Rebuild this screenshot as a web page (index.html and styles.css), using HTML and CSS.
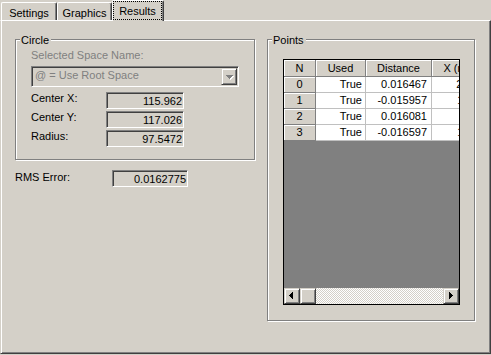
FILE: index.html
```html
<!DOCTYPE html>
<html>
<head>
<meta charset="utf-8">
<link rel="stylesheet" href="styles.css">
</head>
<body>
<div class="tabs">
  <div class="tab tab-settings">Settings</div>
  <div class="tab tab-graphics">Graphics</div>
  <div class="tab tab-active"><span class="focus">Results</span></div>
</div>
<div class="panel">
  <div class="left">
    <div class="group circle">
      <div class="group-title">Circle</div>
      <div class="circle-body">
        <div class="field-label disabled">Selected Space Name:</div>
        <div class="combo">
          <span class="combo-text">@ = Use Root Space</span>
          <span class="combo-btn">
            <svg width="14" height="15" viewBox="0 0 14 15" shape-rendering="crispEdges">
              <g fill="#ffffff">
                <rect x="5" y="7" width="7" height="1"/><rect x="6" y="8" width="5" height="1"/><rect x="7" y="9" width="3" height="1"/><rect x="8" y="10" width="1" height="1"/>
              </g>
              <g fill="#808080">
                <rect x="4" y="6" width="7" height="1"/><rect x="5" y="7" width="5" height="1"/><rect x="6" y="8" width="3" height="1"/><rect x="7" y="9" width="1" height="1"/>
              </g>
            </svg>
          </span>
        </div>
        <div class="rows">
          <div class="row"><span class="row-label">Center X:</span><span class="value val-c">115.962</span></div>
          <div class="row"><span class="row-label">Center Y:</span><span class="value val-c">117.026</span></div>
          <div class="row"><span class="row-label">Radius:</span><span class="value val-c">97.5472</span></div>
        </div>
      </div>
    </div>
    <div class="row rms"><span class="rms-label">RMS Error:</span><span class="value val-rms">0.0162775</span></div>
  </div>
  <div class="group points">
    <div class="group-title">Points</div>
    <div class="grid">
      <div class="cells">
        <div class="hc">N</div><div class="hc">Used</div><div class="hc">Distance</div><div class="hc">X (mm)</div>
        <div class="rh">0</div><div class="dc">True</div><div class="dc dist">0.016467</div><div class="dc xc">213.51</div>
        <div class="rh">1</div><div class="dc">True</div><div class="dc dist">-0.015957</div><div class="dc xc">115.97</div>
        <div class="rh">2</div><div class="dc">True</div><div class="dc dist">0.016081</div><div class="dc xc">18.42</div>
        <div class="rh">3</div><div class="dc">True</div><div class="dc dist">-0.016597</div><div class="dc xc">115.95</div>
      </div>
      <div class="scrollbar">
        <span class="sb-btn">
          <svg width="14" height="14" viewBox="0 0 14 14" shape-rendering="crispEdges"><g fill="#000"><rect x="4" y="6" width="1" height="1"/><rect x="5" y="5" width="1" height="3"/><rect x="6" y="4" width="1" height="5"/><rect x="7" y="3" width="1" height="7"/></g></svg>
        </span>
        <span class="sb-btn"></span>
        <span class="sb-track"></span>
        <span class="sb-btn">
          <svg width="14" height="14" viewBox="0 0 14 14" shape-rendering="crispEdges"><g fill="#000"><rect x="5" y="3" width="1" height="7"/><rect x="6" y="4" width="1" height="5"/><rect x="7" y="5" width="1" height="3"/><rect x="8" y="6" width="1" height="1"/></g></svg>
        </span>
      </div>
    </div>
  </div>
</div>
</body>
</html>
```
FILE: styles.css
```css
* { box-sizing: border-box; }
html, body { margin: 0; padding: 0; }
body {
  width: 491px;
  height: 355px;
  overflow: hidden;
  background: #d4d0c8;
  color: #000;
  font-family: "Liberation Sans", Arial, sans-serif;
  font-size: 11px;
  line-height: 13px;
}

/* tabs */
.tabs {
  display: flex;
  align-items: flex-end;
  height: 20px;
  padding-left: 1px;
}
.tab {
  height: 18px;
  padding-top: 4px;
  text-align: center;
  background: #d4d0c8;
  border-top: 1px solid #fff;
  border-left: 1px solid #fff;
  border-right: 1px solid #404040;
  box-shadow: inset -1px 0 #808080;
  border-radius: 2px 2px 0 0;
}
.tab-settings { width: 56px; }
.tab-graphics { width: 55px; }
.tab-active {
  width: 52px;
  height: 21px;
  margin-bottom: -1px;
  padding: 0 1px 0 0;
  position: relative;
  z-index: 1;
}
.focus {
  display: block;
  height: 19px;
  padding-top: 4px;
  outline: 1px dotted #000;
  outline-offset: -1px;
}

/* main panel */
.panel {
  height: 334px;
  display: flex;
  align-items: flex-start;
  padding: 18px 0 0 14px;
  border-top: 1px solid #fff;
  border-left: 1px solid #d4d0c8;
  border-right: 1px solid #404040;
  border-bottom: 1px solid #404040;
  box-shadow: inset 1px 0 #fff, inset -1px -1px #808080;
}
.left { width: 240px; flex: none; }

.group {
  border: 1px solid #808080;
  box-shadow: inset 1px 1px #fff, 1px 1px #fff;
}
.group-title {
  width: max-content;
  margin: -6px 0 0 4px;
  padding: 0 2px 0 1px;
  background: #d4d0c8;
  line-height: 13px;
}
.circle-body { padding: 2px 0 12px 15px; }
.disabled { color: #808080; }

.combo {
  display: flex;
  width: 208px;
  height: 21px;
  margin-top: 4px;
  padding: 1px;
  border: 1px solid;
  border-color: #808080 #fff #fff #808080;
  box-shadow: inset 1px 1px #404040, inset -1px -1px #d4d0c8;
}
.combo-text {
  flex: 1;
  color: #808080;
  padding-left: 2px;
  line-height: 15px;
  white-space: nowrap;
}
.combo-btn {
  display: block;
  width: 16px;
  height: 17px;
  border: 1px solid;
  border-color: #d4d0c8 #404040 #404040 #d4d0c8;
  box-shadow: inset 1px 1px #fff, inset -1px -1px #808080;
}
.combo-btn svg, .sb-btn svg { display: block; }

.rows {
  display: flex;
  flex-direction: column;
  gap: 2px;
  margin-top: 5px;
}
.row { display: flex; align-items: flex-start; }
.row-label { width: 75px; flex: none; }
.value {
  display: block;
  height: 17px;
  padding: 2px 1px 0 0;
  text-align: right;
  line-height: 13px;
  border: 1px solid;
  border-color: #808080 #fff #fff #808080;
  box-shadow: inset 1px 1px #404040, inset -1px -1px #d4d0c8;
  white-space: nowrap;
}
.val-c { width: 78px; }
.rms { margin-top: 10px; }
.rms-label { width: 97px; flex: none; margin-top: 1px; }
.val-rms { width: 76px; }

/* points */
.points {
  width: 208px;
  height: 282px;
  margin-left: 12px;
  flex: none;
}
.grid {
  width: 177px;
  height: 246px;
  margin: 12px 0 0 15px;
  border: 1px solid #000;
  background: #808080;
  overflow: hidden;
  display: flex;
  flex-direction: column;
  justify-content: space-between;
}
.cells {
  flex: none;
  width: 208px;
  display: grid;
  grid-template-columns: 32px 50px 66px 60px;
  grid-template-rows: 17px;
  grid-auto-rows: 16px;
}
.hc, .rh {
  background: #d4d0c8;
  border-right: 1px solid #808080;
  border-bottom: 1px solid #808080;
  box-shadow: inset 1px 1px #fff;
  text-align: center;
  white-space: nowrap;
}
.hc { line-height: 16px; }
.rh { line-height: 15px; }
.dc {
  background: #fff;
  border-right: 1px solid #c0c0c0;
  border-bottom: 1px solid #c0c0c0;
  text-align: right;
  padding-right: 3px;
  line-height: 15px;
  white-space: nowrap;
}
.dist { padding-right: 4px; }
.xc { padding-right: 1px; }

.scrollbar {
  flex: none;
  display: flex;
  height: 16px;
}
.sb-btn {
  display: block;
  width: 16px;
  height: 16px;
  flex: none;
  background: #d4d0c8;
  border: 1px solid;
  border-color: #d4d0c8 #404040 #404040 #d4d0c8;
  box-shadow: inset 1px 1px #fff, inset -1px -1px #808080;
}
.sb-track {
  flex: 1;
  background: repeating-conic-gradient(#fff 0 25%, #d4d0c8 0 50%) 0 0 / 2px 2px;
}
```
